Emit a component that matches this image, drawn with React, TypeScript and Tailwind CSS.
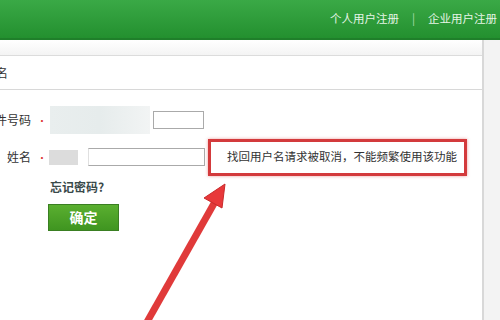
import React from "react";

export default function App() {
  const font = { fontFamily: '"Noto Sans CJK SC", "Liberation Sans", sans-serif' };
  return (
    <div className="relative w-[500px] h-[320px] overflow-hidden bg-white" style={font}>
      {/* header */}
      <div className="h-[40px] bg-gradient-to-b from-[#3aa946] to-[#23902f] border-b-2 border-[#1f7f2a] flex items-center justify-end pr-[3px] text-[11.5px] text-[#e6f5e6]">
        <span>个人用户注册</span>
        <span className="mx-[13px] text-[#a9dcaa]">|</span>
        <span>企业用户注册</span>
      </div>
      <div className="flex h-[280px]">
        <div className="w-[482px] flex flex-col">
          <div className="h-[16px] bg-gradient-to-b from-white to-[#f4f4f4] border-b border-[#dcdcdc]" />
          <div className="h-[34px] flex items-center border-b border-[#d8d8d8] text-[12px] text-[#333]">
            <span className="-ml-[4px]">名</span>
          </div>
          {/* form */}
          <div className="relative flex flex-col">
            <div className="flex items-center h-[20px] mt-[20px]">
              <div className="w-[31px] flex justify-end overflow-visible">
                <span className="whitespace-nowrap text-[12px] text-[#333]">件号码</span>
              </div>
              <span className="ml-[6px] text-[#d33] text-[10px]">•</span>
              <div className="ml-[3px] w-[100px] h-[28px] bg-gradient-to-r from-[#e9eeee] via-[#e6ecec] to-[#f2f4f4]" />
              <div className="ml-[3px] w-[51px] h-[18px] border border-[#aaa] bg-white" />
            </div>
            <div className="flex items-center h-[20px] mt-[17px]">
              <span className="w-[31px] text-right text-[12px] text-[#333]">姓名</span>
              <span className="ml-[6px] text-[#d33] text-[10px]">•</span>
              <div className="ml-[2px] w-[29px] h-[15px] bg-[#dcdcdc]" />
              <div className="ml-[10px] w-[117px] h-[18px] border border-[#aaa] border-l-[#e0e0e0] bg-white" />
              <div className="ml-[3px] w-[259px] h-[37px] shrink-0 border-[3px] border-[#d33a3c] flex items-center pl-[16px] text-[11.5px] text-[#333] whitespace-nowrap shadow-[0_0_3px_rgba(220,60,60,0.5)]">
                找回用户名请求被取消，不能频繁使用该功能
              </div>
            </div>
            <div className="ml-[50px] mt-[11px] text-[12px] font-bold text-[#3a4a4a]">忘记密码?</div>
            <div className="ml-[48px] mt-[8px] w-[71px] h-[27px] bg-gradient-to-b from-[#5aaf30] to-[#3f9520] border border-[#3a7f22] flex items-center justify-center text-white text-[14px] font-bold">
              确定
            </div>
          </div>
        </div>
        <div className="w-[2px] bg-[#d8d8d8]" />
        <div className="flex-1 bg-[#f3f3f3]" />
      </div>
      {/* arrow */}
      <svg className="absolute left-0 top-0" width="500" height="320" viewBox="0 0 500 320">
        <line x1="147" y1="322" x2="216" y2="200" stroke="#e03a3a" strokeWidth="7" />
        <polygon points="225,184 204,198 222,208" fill="#e8383a" stroke="#c92a2a" strokeWidth="1" />
      </svg>
    </div>
  );
}
